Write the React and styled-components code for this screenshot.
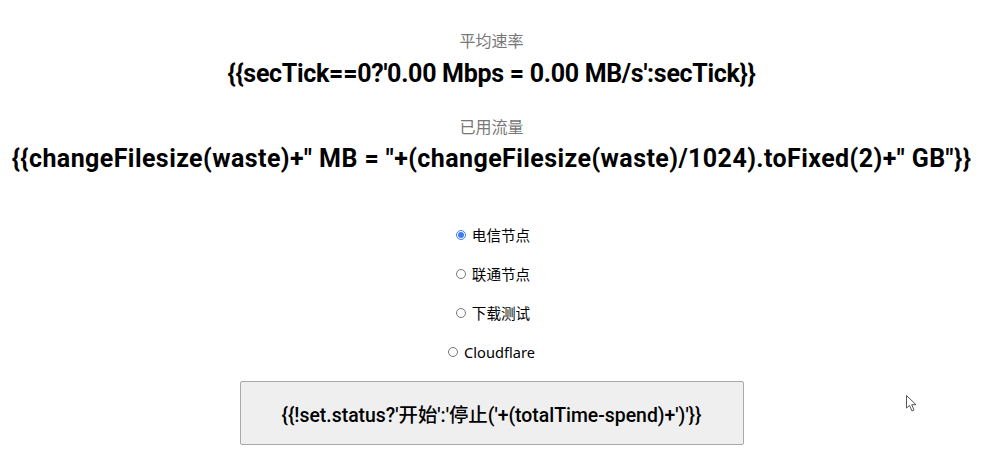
import React from "react";
import styled, { createGlobalStyle } from "styled-components";

const Global = createGlobalStyle`
  html, body { margin: 0; padding: 0; background: #fff; }
  body { font-family: "Noto Sans", "Noto Sans CJK SC", sans-serif; }
`;

const Page = styled.div`
  width: 983px;
  height: 458px;
  position: relative;
  display: flex;
  flex-direction: column;
  align-items: center;
  padding-top: 30px;
  box-sizing: border-box;
`;

const Stat = styled.section`
  display: flex;
  flex-direction: column;
  align-items: center;
  gap: ${(p) => p.$inner}px;
  margin-bottom: ${(p) => p.$gap}px;
`;

const Label = styled.div`
  font-family: "Noto Sans CJK SC", sans-serif;
  font-size: 16px;
  line-height: 20px;
  color: #777;
`;

const Value = styled.div`
  font-family: Roboto, "Noto Sans CJK SC", sans-serif;
  font-weight: 700;
  font-size: 25px;
  line-height: 34px;
  color: #000;
  white-space: nowrap;
  letter-spacing: ${(p) => p.$ls || 0}px;
`;

const Radios = styled.div`
  display: flex;
  flex-direction: column;
  align-items: center;
  gap: 19px;
  margin-top: 49px;
`;

const RadioRow = styled.label`
  display: flex;
  align-items: center;
  gap: 6px;
  padding-left: ${(p) => (p.$latin ? 0 : 3)}px;
  font-family: "Noto Sans", "Noto Sans CJK SC", sans-serif;
  font-size: 14.6px;
  line-height: 20px;
  color: #000;
`;

const Radio = styled.input`
  margin: 0;
  width: 10px;
  height: 10px;
  accent-color: #3b7cf5;
`;

const Button = styled.button`
  margin-top: 19px;
  width: 504px;
  height: 64px;
  background: #efefef;
  border: 1px solid #a9a9a9;
  border-radius: 2px;
  font-family: Roboto, "Noto Sans CJK SC", sans-serif;
  font-weight: 500;
  font-size: 19.4px;
  color: #000;
`;

const Cursor = styled.svg`
  position: absolute;
  left: 906px;
  top: 395px;
`;

export default function App() {
  const nodes = ["电信节点", "联通节点", "下载测试", "Cloudflare"];
  return (
    <Page>
      <Global />
      <Stat $gap={25} $inner={7}>
        <Label>平均速率</Label>
        <Value $ls={-0.3}>{"{{secTick==0?'0.00 Mbps = 0.00 MB/s':secTick}}"}</Value>
      </Stat>
      <Stat $gap={0} $inner={6}>
        <Label>已用流量</Label>
        <Value $ls={0.42}>{'{{changeFilesize(waste)+" MB = "+(changeFilesize(waste)/1024).toFixed(2)+" GB"}}'}</Value>
      </Stat>
      <Radios>
        {nodes.map((n, i) => (
          <RadioRow key={n} $latin={i === 3}>
            <Radio type="radio" name="node" defaultChecked={i === 0} />
            {n}
          </RadioRow>
        ))}
      </Radios>
      <Button>{"{{!set.status?'开始':'停止('+(totalTime-spend)+')'}}"}</Button>
      <Cursor width="12" height="18" viewBox="0 0 12 18">
        <path d="M0.5 0.5 L0.5 13 L3.5 10.5 L6 16 L8 15 L5.7 9.7 L10 9.7 Z" fill="#fff" stroke="#555" strokeWidth="1" />
      </Cursor>
    </Page>
  );
}
